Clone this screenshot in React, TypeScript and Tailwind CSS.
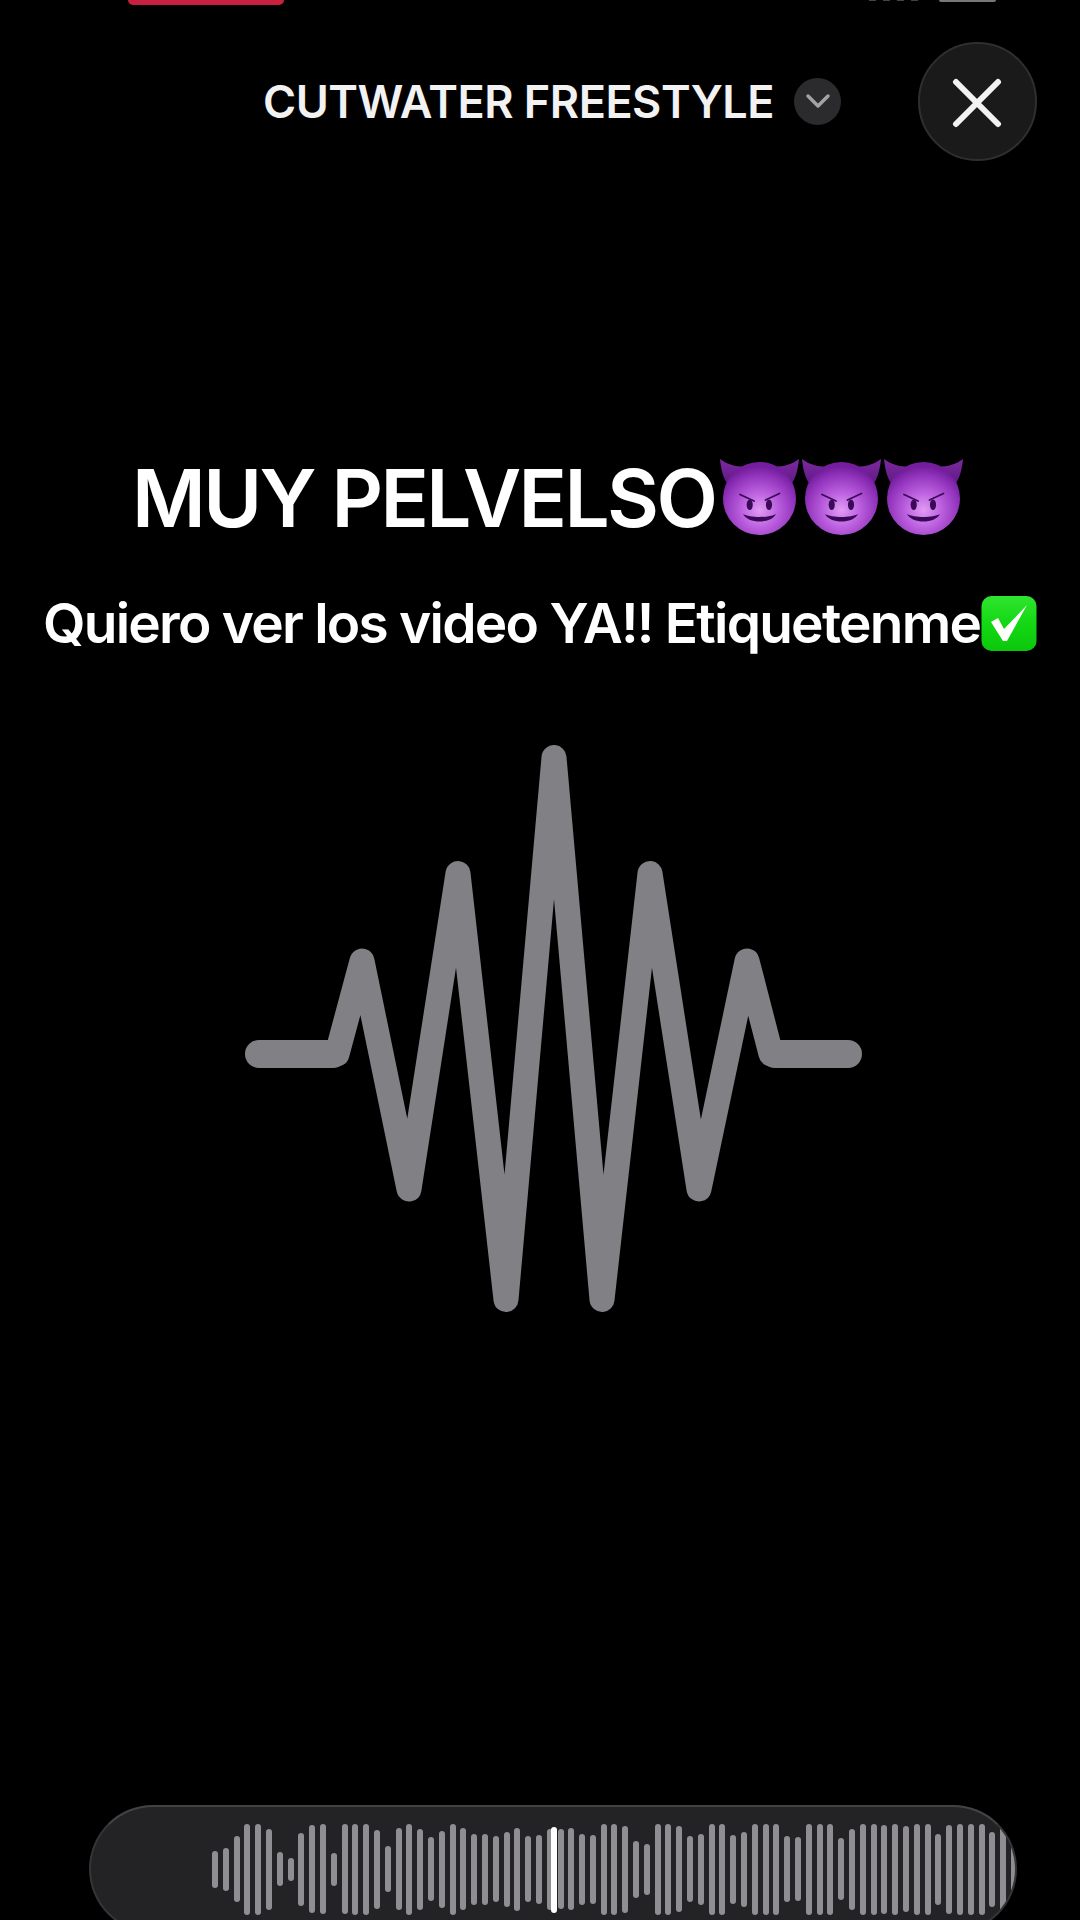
const bars = [
  37, 43, 66, 91, 91, 81, 34, 23, 73, 88, 90, 33, 90, 91, 91, 79, 46, 82, 91, 81, 64, 77, 91, 82, 71, 71, 66, 75, 83, 66, 69, 81,
  80, 82, 71, 69, 91, 91, 87, 57, 51, 91, 91, 86, 66, 71, 91, 91, 69, 75, 91, 91, 91, 66, 64, 91, 91, 91, 62, 81, 91, 91, 89, 91,
  86, 91, 91, 71, 89, 91, 91, 91, 75, 91, 91,
];

function DevilEmoji() {
  return (
    <svg width="81" height="77" viewBox="0 0 81 77" className="shrink-0">
      <defs>
        <radialGradient id="devil-face" cx="0.5" cy="0.66" r="0.6">
          <stop offset="0" stopColor="#e09cf4" />
          <stop offset="0.4" stopColor="#bd62e0" />
          <stop offset="0.8" stopColor="#9234bc" />
          <stop offset="1" stopColor="#741e9e" />
        </radialGradient>
        <linearGradient id="devil-horn" x1="0" y1="0" x2="0" y2="1">
          <stop offset="0" stopColor="#7c2aa0" />
          <stop offset="1" stopColor="#5b1780" />
        </linearGradient>
      </defs>
      <path d="M1 1C2 12 5 24 12 30L34 8C22 10 10 8 1 1Z" fill="url(#devil-horn)" />
      <path d="M80 1C79 12 76 24 69 30L47 8C59 10 71 8 80 1Z" fill="url(#devil-horn)" />
      <circle cx="40.5" cy="40.5" r="36.5" fill="url(#devil-face)" />
      <ellipse cx="30.7" cy="46.7" rx="3.1" ry="5.2" fill="#3a0a58" />
      <ellipse cx="50" cy="46.7" rx="3.1" ry="5.2" fill="#3a0a58" />
      <path d="M21 36.5L35 43" stroke="#3a0a58" strokeWidth="1.8" strokeLinecap="round" />
      <path d="M60.5 35.5L46.5 42" stroke="#3a0a58" strokeWidth="1.8" strokeLinecap="round" />
      <path d="M24 56C31 60 50 60 57 56C52 66 29 66 24 56Z" fill="#3a0a58" />
    </svg>
  );
}

function CheckEmoji() {
  return (
    <svg width="56" height="57" viewBox="0 0 56 57" className="shrink-0">
      <defs>
        <linearGradient id="check-bg" x1="0" y1="0" x2="0" y2="1">
          <stop offset="0" stopColor="#2fe52f" />
          <stop offset="0.5" stopColor="#14d814" />
          <stop offset="1" stopColor="#0cc70c" />
        </linearGradient>
      </defs>
      <rect x="0.5" y="1" width="55" height="55" rx="10" fill="url(#check-bg)" />
      <path d="M10 27L17 23L23 34L46 10L26 46H22Z" fill="#fff" />
    </svg>
  );
}

export default function App() {
  return (
    <div className="w-[1080px] h-[1920px] bg-black overflow-hidden flex flex-col font-['Inter',sans-serif] text-white">
      {/* cut off status bar */}
      <div className="h-[5px] flex items-start">
        <div className="ml-[128px] w-[156px] h-[5px] rounded-b-[10px] bg-[#c8203f]" />
        <div className="ml-[585px] flex gap-[7px]">
          <div className="w-[7px] h-[1px] bg-[#444]" />
          <div className="w-[7px] h-[1px] bg-[#444]" />
          <div className="w-[7px] h-[1px] bg-[#444]" />
          <div className="w-[7px] h-[1px] bg-[#444]" />
        </div>
        <div className="ml-[21px] w-[57px] h-[2px] rounded-b-[2px] bg-[#777]" />
      </div>

      <div className="mt-[37px] h-[118px] flex items-center">
        <span className="ml-[263px] w-[511px] shrink-0 whitespace-nowrap text-[45px] leading-none font-semibold text-[#f2f2f2] tracking-[-0.5px]">
          CUTWATER FREESTYLE
        </span>
        <div className="ml-[20px] w-[47px] h-[47px] rounded-full bg-[#2b2b2d] flex items-center justify-center">
          <svg width="26" height="16" viewBox="0 0 26 16" fill="none">
            <path d="M3 3L13 13L23 3" stroke="#a3a3a6" strokeWidth="3.5" strokeLinecap="round" strokeLinejoin="round" />
          </svg>
        </div>
        <div className="ml-[77px] w-[119px] h-[119px] rounded-full bg-[#1a1a1b] border-2 border-[#2f2f30] flex items-center justify-center">
          <svg width="50" height="50" viewBox="0 0 50 50" fill="none" className="mt-[3px] mr-[1px]">
            <path d="M4 4L46 46M46 4L4 46" stroke="#f2f2f2" strokeWidth="6" strokeLinecap="round" />
          </svg>
        </div>
      </div>

      <div className="mt-[298px] h-[77px] flex items-center">
        <span className="ml-[132px] w-[587px] shrink-0 whitespace-nowrap pt-[2px] text-[80px] leading-none font-semibold tracking-[-2.6px]">
          MUY PELVELSO
        </span>
        <div className="flex gap-[1px]">
          <DevilEmoji />
          <DevilEmoji />
          <DevilEmoji />
        </div>
      </div>

      <div className="mt-[60px] h-[57px] flex items-center">
        <span className="ml-[43px] w-[938px] shrink-0 whitespace-nowrap text-[55px] leading-none font-semibold tracking-[-1.76px]">
          Quiero ver los video YA!! Etiquetenme
        </span>
        <CheckEmoji />
      </div>

      <svg width="630" height="572" viewBox="0 0 630 572" fill="none" className="ml-[240px] mt-[93px]">
        <path d="M19 309H93M535 309H608" stroke="#808085" strokeWidth="28" strokeLinecap="round" />
        <path
          d="M97 309L122 216L169 444L218 128.5L266 554.5L314 12.5L362 554.5L410 128.5L459 444L507 216L531 309"
          stroke="#808085"
          strokeWidth="25"
          strokeLinecap="round"
          strokeLinejoin="round"
        />
      </svg>

      <div className="relative ml-[89px] mt-auto mb-[-13px] w-[928px] h-[128px] shrink-0 rounded-[65px] bg-[#232325] border-2 border-[#353537] border-t-[#434345] overflow-hidden flex items-center gap-[4.81px] pl-[121px]">
        {bars.map((h, i) => (
          <div key={i} className="w-[6px] shrink-0 rounded-[3px] bg-[#8e8e93]" style={{ height: h }} />
        ))}
        <div className="absolute left-[460px] top-[20px] w-[6px] h-[86px] rounded-[3px] bg-white" />
      </div>
    </div>
  );
}
